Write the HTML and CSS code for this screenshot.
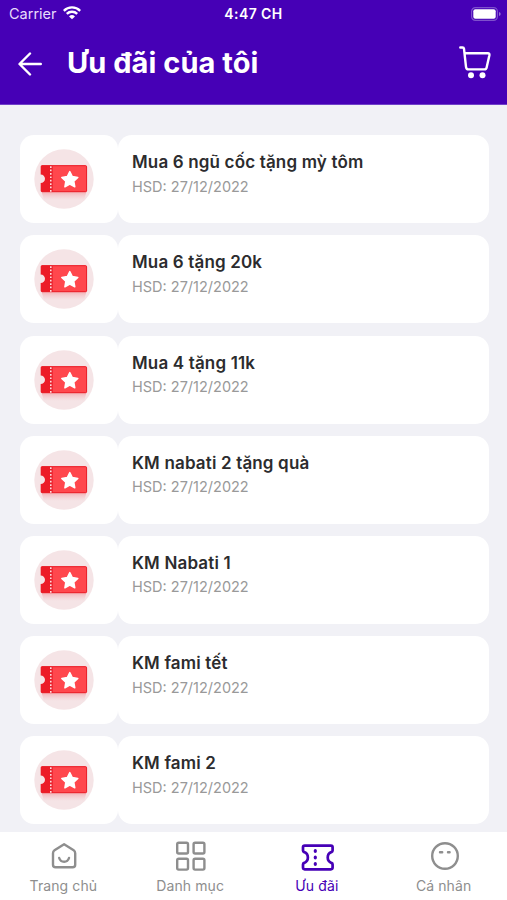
FILE: index.html
```html
<!DOCTYPE html>
<html lang="vi">
<head>
<meta charset="utf-8">
<meta name="viewport" content="width=device-width, initial-scale=1">
<title>Ưu đãi của tôi</title>
<link rel="stylesheet" href="styles.css">
</head>
<body>
<svg class="defs" width="0" height="0" aria-hidden="true">
  <defs>
    <linearGradient id="glow" x1="0" y1="0" x2="0" y2="1">
      <stop offset="0" stop-color="#f05a64" stop-opacity=".5"/>
      <stop offset="1" stop-color="#f0a0a8" stop-opacity="0"/>
    </linearGradient>
    <symbol id="voucher" viewBox="0 0 60 60">
      <circle cx="30" cy="30" r="29.7" fill="#f5e4e6"/>
      <path d="M7 41h46l-3 10H10z" fill="url(#glow)"/>
      <path d="M8 16.3h9.5v26.8H8q-1.3 0-1.3-1.3v-7.8a4.3 4.3 0 0 0 0-8.6v-7.8q0-1.300 1.300-1.300z" fill="#ec1c27"/>
      <path d="M17 16.300h34.200q1.800 0 1.800 1.800v23.200q0 1.800-1.800 1.800H17z" fill="#ff474d"/>
      <path d="M8 16.700h43.500q1.100 0 1.100 1.100v23.800q0 1.100-1.100 1.100H8" fill="none" stroke="#e9202b" stroke-width="1"/>
      <path d="M17.500 17v26" stroke="#e9202b" stroke-width="2.400"/>
      <path d="M16.800 17.200v25.500" stroke="#ffe3e5" stroke-width="1.500" stroke-dasharray="1.700 1.700"/>
      <path d="M35.800 22.600l2.500 5 5.500.8-4 3.900 1 5.500-5-2.600-4.900 2.600.9-5.500-4-3.900 5.500-.8z" fill="#fff" stroke="#fff" stroke-width="1.500" stroke-linejoin="round"/>
    </symbol>
  </defs>
</svg>
<div class="screen">
  <header class="header">
    <div class="status">
      <div class="carrier"><span>Carrier</span>
        <svg width="18" height="14" viewBox="0 0 18 14" fill="none" stroke="#fff" stroke-width="2.400"><path d="M.8 4.800a11.600 11.600 0 0 1 16.400 0M3.800 7.900a7.400 7.400 0 0 1 10.400 0"/><path d="M9 13.300L6 10.400a4.300 4.300 0 0 1 6 0z" fill="#fff" stroke="none"/></svg>
      </div>
      <div class="clock">4:47 CH</div>
      <svg class="battery" width="30" height="14" viewBox="0 0 30 14"><rect x=".6" y=".6" width="25.800" height="12.800" rx="3.800" fill="none" stroke="#7e50cc" stroke-width="1.200"/><rect x="2.300" y="2.300" width="22.400" height="9.400" rx="2" fill="#fff"/><path d="M28 5q1.700.5 1.700 2T28 9z" fill="#9470d6"/></svg>
    </div>
    <div class="bar">
      <svg class="back" width="24" height="24" viewBox="0 0 24 24" fill="none" stroke="#fff" stroke-width="2.400" stroke-linecap="round" stroke-linejoin="round"><path d="M12 1.500L1.500 12 12 22.500M2 12h20.800"/></svg>
      <h1 class="title">Ưu đãi của tôi</h1>
      <svg class="cart" width="32" height="33" viewBox="0 0 32 33" fill="none" stroke="#fff" stroke-width="2.400" stroke-linecap="round" stroke-linejoin="round"><path d="M1.300 1.500h2.200q1.300 0 1.500 1.300L7 20.800q.3 2.600 2.500 2.600h15.700q2.300 0 2.600-2.600l2.600-11.500q.3-2-1.500-2H6"/><circle cx="12" cy="29.300" r="3" fill="#fff" stroke="none"/><circle cx="23.500" cy="29.300" r="3" fill="#fff" stroke="none"/></svg>
    </div>
  </header>
  <main class="list">
    <article class="card"><div class="thumb"><svg><use href="#voucher"/></svg></div><div class="info"><h2>Mua 6 ngũ cốc tặng mỳ tôm</h2><p>HSD: 27/12/2022</p></div></article>
    <article class="card"><div class="thumb"><svg><use href="#voucher"/></svg></div><div class="info"><h2>Mua 6 tặng 20k</h2><p>HSD: 27/12/2022</p></div></article>
    <article class="card"><div class="thumb"><svg><use href="#voucher"/></svg></div><div class="info"><h2>Mua 4 tặng 11k</h2><p>HSD: 27/12/2022</p></div></article>
    <article class="card"><div class="thumb"><svg><use href="#voucher"/></svg></div><div class="info"><h2>KM nabati 2 tặng quà</h2><p>HSD: 27/12/2022</p></div></article>
    <article class="card"><div class="thumb"><svg><use href="#voucher"/></svg></div><div class="info"><h2>KM Nabati 1</h2><p>HSD: 27/12/2022</p></div></article>
    <article class="card"><div class="thumb"><svg><use href="#voucher"/></svg></div><div class="info"><h2>KM fami tết</h2><p>HSD: 27/12/2022</p></div></article>
    <article class="card"><div class="thumb"><svg><use href="#voucher"/></svg></div><div class="info"><h2>KM fami 2</h2><p>HSD: 27/12/2022</p></div></article>
  </main>
  <nav class="tabs">
    <a class="tab"><svg viewBox="0 0 34 30"><path d="M18.100 3.200l9.600 6.100q1.500 1 1.500 2.900v11.500q0 2.600-2.600 2.600h-17q-2.600 0-2.600-2.600V12.200q0-1.900 1.500-2.900zM13.200 17q1.200 3.800 4.900 3.800t4.900-3.800"/></svg><span>Trang chủ</span></a>
    <a class="tab"><svg viewBox="0 0 34 30"><rect x="4.200" y="1.700" width="10.800" height="10.800" rx="1.500"/><rect x="20.600" y="1.700" width="10.800" height="10.800" rx="1.500"/><rect x="4.200" y="17.800" width="10.800" height="10.800" rx="1.500"/><rect x="20.600" y="17.800" width="10.800" height="10.800" rx="1.500"/></svg><span>Danh mục</span></a>
    <a class="tab active"><svg viewBox="0 0 34 30"><path d="M4.700 4.600h26.200q1.700 0 1.700 1.700v3.200q0 1.200-1.200 1.600a5.800 5.800 0 0 0 0 10.800q1.200.4 1.200 1.600v3.100q0 1.700-1.700 1.700H4.700Q3 28.300 3 26.600v-3.100q0-1.200 1.200-1.600a5.800 5.800 0 0 0 0-10.800Q3 10.700 3 9.500V6.300q0-1.700 1.700-1.700z"/><path d="M15.300 9.700v.6M15.300 16.200v.6M15.300 22.700v.6" stroke-width="3.200"/></svg><span>Ưu đãi</span></a>
    <a class="tab"><svg viewBox="0 0 34 30"><circle cx="18" cy="15" r="12.800"/><path d="M13 11.300h2.200M21 11.300h1.600"/></svg><span>Cá nhân</span></a>
  </nav>
</div>
</body>
</html>
```
FILE: styles.css
```css
* { box-sizing: border-box; }
body { margin: 0; background: #f1f1f6; font-family: Inter, "Liberation Sans", sans-serif; }
h1, h2, p { margin: 0; }
svg { display: block; flex: none; }
.defs { position: absolute; }
.screen { width: 507px; height: 900px; display: flex; flex-direction: column; overflow: hidden; }
.header { height: 105px; flex: none; background: #4600b6; color: #fff; border-bottom: 1px solid #7040c8; }
.status { display: grid; grid-template-columns: 1fr auto 1fr; align-items: center; height: 27px; padding: 0 6px 0 9px; font-size: 14px; }
.carrier { display: flex; align-items: center; gap: 6px; color: #e8dcfb; font-size: 14.500px; letter-spacing: 0; }
.carrier svg { margin-top: -2px; }
.clock { font-weight: 600; letter-spacing: .4px; margin-right: 3px; }
.battery { justify-self: end; }
.bar { display: flex; align-items: center; height: 72px; padding: 0 16px 1px 18px; }
.back { margin-top: 3px; }
.title { flex: 1; margin-left: 25px; font-size: 29px; line-height: 40px; font-weight: 700; letter-spacing: .05px; white-space: nowrap; }
.list { flex: 1; min-height: 0; padding: 30.200px 18px 0 20px; display: flex; flex-direction: column; gap: 12.200px; overflow: hidden; }
.card { display: flex; height: 88px; flex: none; }
.thumb { width: 97.500px; display: flex; align-items: center; justify-content: center; background: #fff; border-radius: 14px; padding-right: 10px; }
.thumb svg { width: 60px; height: 60px; }
.info { flex: 1; background: #fff; border-radius: 14px; padding: 16px 14.500px; }
.info h2 { color: #2c2c2e; font-size: 17px; line-height: 22px; font-weight: 600; letter-spacing: .16px; white-space: nowrap; }
.info p { margin-top: 3.400px; color: #999; font-size: 14.500px; line-height: 20px; }
.tabs { height: 68px; flex: none; display: grid; grid-template-columns: repeat(4, 1fr); background: #fff; }
.tab { display: flex; flex-direction: column; align-items: center; padding-top: 9px; color: #8e8e8e; font-size: 14px; line-height: 20px; letter-spacing: .1px; }
.tab svg { width: 34px; height: 30px; fill: none; stroke: currentColor; stroke-width: 2.400; stroke-linecap: round; stroke-linejoin: round; }
.tab span { margin-top: 5px; }
.tab.active { color: #4600b6; }
.tab.active svg { stroke-width: 2.700; }
```
